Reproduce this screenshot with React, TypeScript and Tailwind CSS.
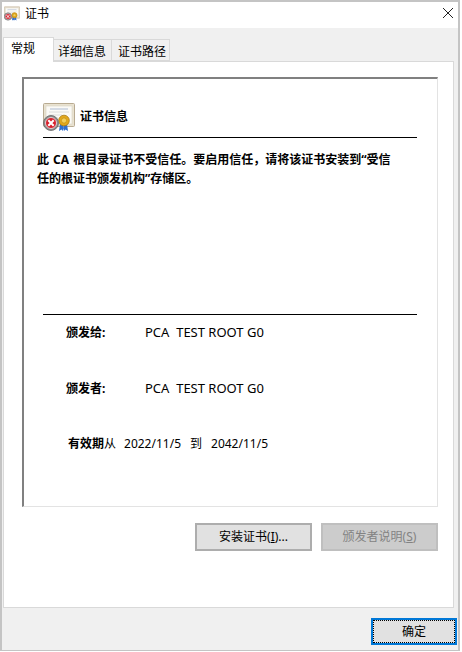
const font = { fontFamily: '"Noto Sans", "Noto Sans CJK SC", sans-serif' };

function CertIcon({ w, h }: { w: number; h: number }) {
  return (
    <svg width={w} height={h} viewBox="0 0 32 28" className="shrink-0">
      <rect x="0.5" y="0.5" width="31" height="23" rx="1" fill="#e9e2d0" stroke="#b8ab92" />
      <rect x="3" y="3" width="26" height="18" fill="#fbfaf6" stroke="#d8d2c4" strokeWidth="0.6" />
      <path d="M7 6h18" stroke="#aebcd2" strokeWidth="1" />
      <path d="M6 9h20M6 12h13M6 15h9" stroke="#d5d5d5" strokeWidth="0.8" />
      <path d="M17 21l-1 7 2.500-1.500 1.500 1.500 1-6zM24 21l1 7-2.500-1.500-1.500 1.500-1-6z" fill="#2f6fd0" />
      <circle cx="21" cy="17.500" r="5.300" fill="#e3a81c" stroke="#a87a10" strokeWidth="0.8" />
      <circle cx="21" cy="17.500" r="2.600" fill="#f3cf5a" stroke="#b98a14" strokeWidth="0.6" />
      <circle cx="8" cy="20" r="7.500" fill="#8d8d8d" stroke="#666" strokeWidth="0.8" />
      <circle cx="8" cy="20" r="5.500" fill="#d8202c" stroke="#eee" strokeWidth="0.8" />
      <path d="M5.300 17.300l5.400 5.400M10.700 17.300l-5.400 5.400" stroke="#fff" strokeWidth="2" />
    </svg>
  );
}

function Row({ label, value }: { label: string; value: string }) {
  return (
    <div className="flex h-[18px] items-center pl-[66px] text-xs text-black">
      <span className="w-[79px] font-bold">{label}</span>
      <span className="whitespace-pre text-[13px]">{value}</span>
    </div>
  );
}

function Button({ children, disabled, className }: { children: React.ReactNode; disabled?: boolean; className: string }) {
  return (
    <div
      className={`flex h-7 items-center justify-center border-2 pb-[1px] text-xs ${
        disabled ? "border-[#bfbfbf] bg-[#cccccc] text-[#838383]" : "border-[#adadad] bg-[#e1e1e1] text-black"
      } ${className}`}
    >
      {children}
    </div>
  );
}

export default function App() {
  return (
    <div className="h-[652px] w-[462px] bg-white" style={font}>
      <div className="flex h-[651px] w-[460px] flex-col border-2 border-b border-[#c4c4c4]">
        <div className="flex h-[26px] shrink-0 items-center bg-white pb-[3px] pl-[2px] pr-[2px]">
          <CertIcon w={16} h={15} />
          <span className="ml-[5px] text-xs text-black">证书</span>
          <svg width="12" height="12" viewBox="0 0 12 12" className="-mt-px ml-auto mr-[2px]">
            <path d="M1 1l10 10M11 1L1 11" stroke="#222" strokeWidth="1" fill="none" />
          </svg>
        </div>
        <div className="flex min-h-0 flex-1 flex-col bg-[#f0f0f0] pl-[1px] pr-[4px]">
          <div className="flex h-[33px] shrink-0 items-end pt-[9px]">
            <div className="z-10 -mb-px flex h-[25px] w-[51px] items-start border border-b-0 border-[#d9d9d9] bg-white pl-[7px] pt-[2px] text-xs leading-[18px] text-black">
              常规
            </div>
            <div className="flex h-[22px] w-[58px] items-center border-y border-r border-[#d9d9d9] bg-[#f0f0f0] pl-[4px] pt-[3px] text-xs text-black">
              详细信息
            </div>
            <div className="flex h-[22px] w-[58px] items-center border-y border-r border-[#d9d9d9] bg-[#f0f0f0] pl-[6px] pt-[3px] text-xs text-black">
              证书路径
            </div>
          </div>
          <div className="flex h-[547px] shrink-0 flex-col border border-[#d9d9d9] bg-white pl-[18px] pr-[15px] pt-[15px]">
            <div className="flex h-[430px] shrink-0 flex-col border-b border-l-2 border-r border-t-2 border-[#e3e3e3] border-l-[#808080] border-t-[#808080] pl-[19px] pr-[20px]">
              <div className="flex h-[59px] shrink-0 items-start border-b border-black pt-[24px]">
                <CertIcon w={32} h={28} />
                <span className="ml-[5px] mt-[6px] text-xs font-bold text-black">证书信息</span>
              </div>
              <p className="-ml-[6px] mt-[12px] h-[164px] w-[360px] shrink-0 text-xs font-bold leading-[19px] text-black [word-spacing:1px]">
                此 CA 根目录证书不受信任。要启用信任，请将该证书安装到“受信任的根证书颁发机构”存储区。
              </p>
              <div className="h-px shrink-0 bg-black" />
              <div className="-ml-[43px] -mr-[20px] flex flex-col">
                <div className="h-[9px]" />
                <Row label="颁发给:" value="PCA  TEST ROOT G0" />
                <div className="h-[38px]" />
                <Row label="颁发者:" value="PCA  TEST ROOT G0" />
                <div className="h-[37px]" />
                <div className="flex h-[18px] items-center pl-[68px] text-xs text-black">
                  <span className="font-bold">有效期</span>
                  <span>从</span>
                  <span className="ml-[8px]">2022/11/5</span>
                  <span className="ml-[9px]">到</span>
                  <span className="ml-[9px]">2042/11/5</span>
                </div>
              </div>
            </div>
            <div className="mt-[16px] flex justify-end gap-[9px]">
              <Button className="w-[117px]">安装证书(<u>I</u>)...</Button>
              <Button disabled className="w-[117px]">颁发者说明(<u>S</u>)</Button>
            </div>
          </div>
          <div className="flex flex-1 justify-end pt-[10px]">
            <div className="relative -mr-[3px] flex h-[27px] w-[86px] items-center justify-center border-2 border-[#0078d7] bg-[#e1e1e1] pt-[1px] text-xs text-black">
              <div className="absolute inset-0 border border-dotted border-black" />
              确定
            </div>
          </div>
        </div>
      </div>
    </div>
  );
}
